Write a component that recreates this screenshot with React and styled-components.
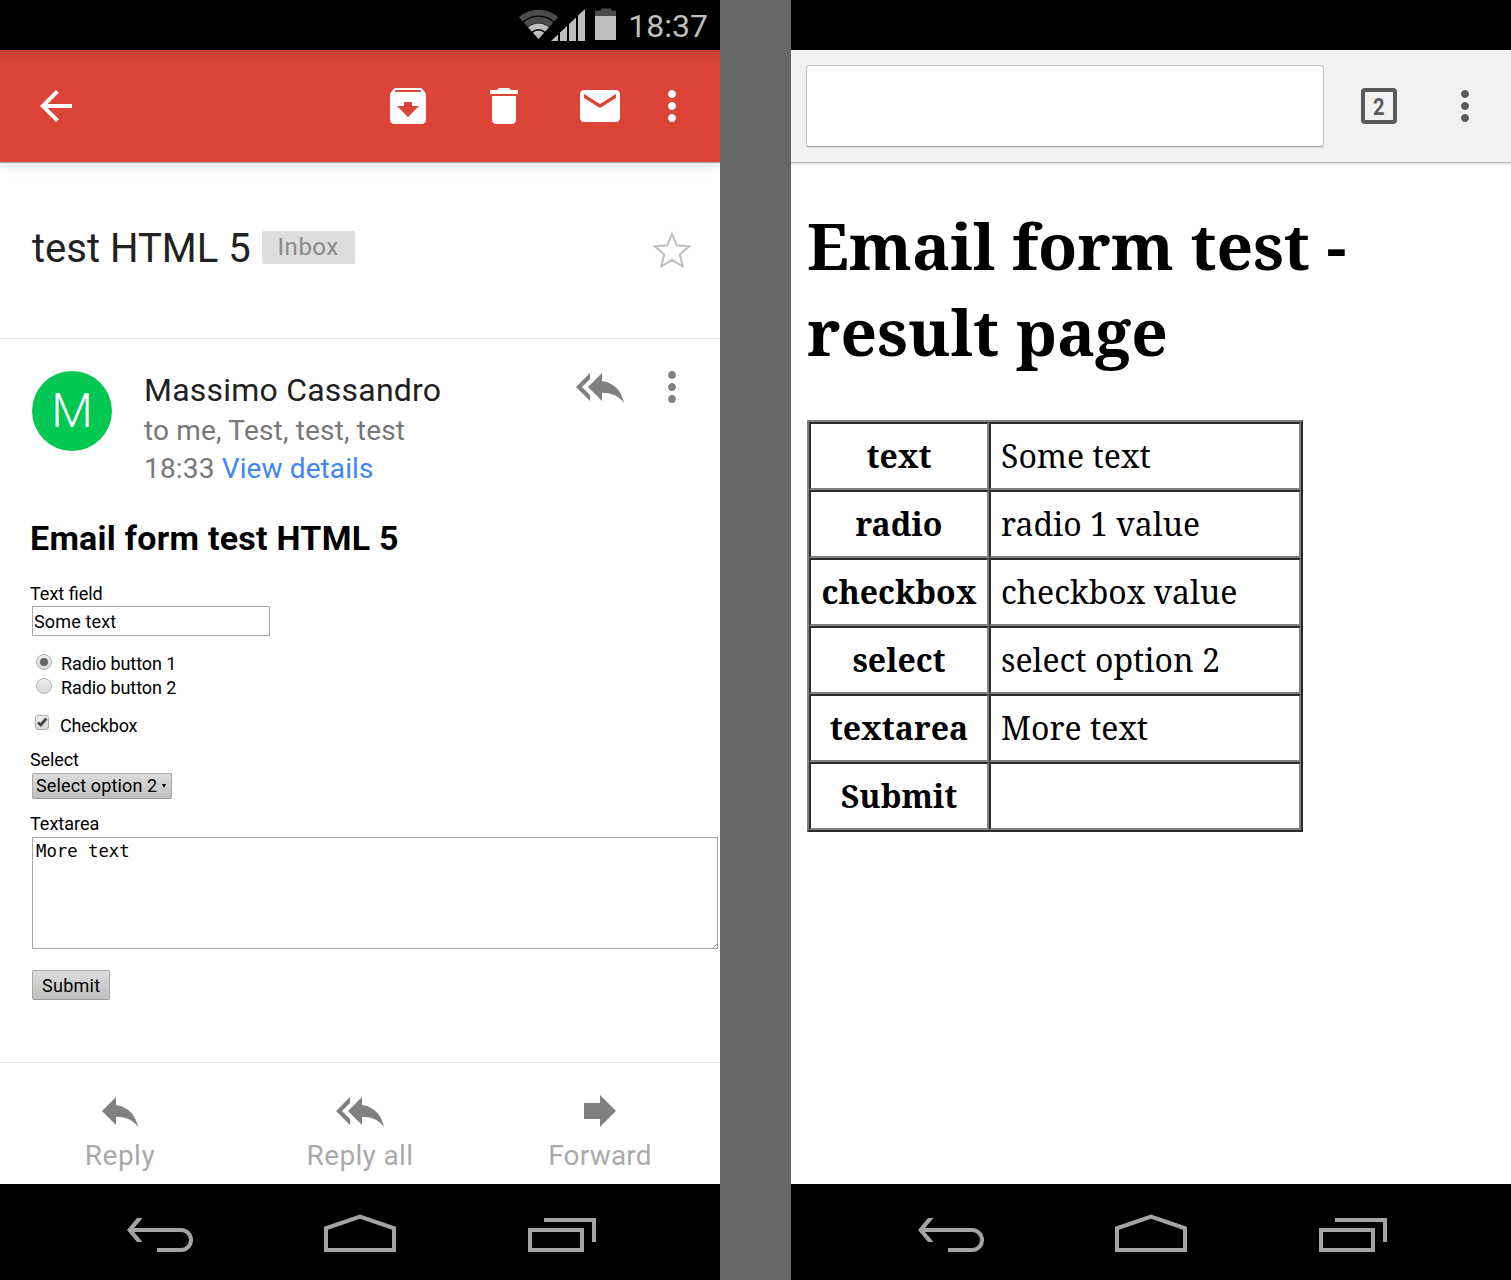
import React from "react";
import styled, { createGlobalStyle } from "styled-components";

const GlobalStyle = createGlobalStyle`
  * { box-sizing: border-box; }
  body { margin: 0; background: #666; font-family: Roboto, "Liberation Sans", sans-serif; }
`;

const Stage = styled.main`
  display: flex;
  justify-content: space-between;
  width: 1511px;
  height: 1280px;
  background: #666;
  overflow: hidden;
`;

const Phone = styled.section`
  display: flex;
  flex-direction: column;
  width: 720px;
  height: 1280px;
  background: #fff;
  overflow: hidden;
`;

const Text = styled.span`
  display: block;
  white-space: pre;
  font-size: ${(p) => p.$size}px;
  line-height: ${(p) => p.$line}px;
  font-weight: ${(p) => p.$weight || 400};
  letter-spacing: ${(p) => p.$track || 0}px;
  color: ${(p) => p.$color || "#000"};
`;

const StatusBar = styled.header`
  display: flex;
  flex: none;
  justify-content: flex-end;
  height: 50px;
  padding-right: 12px;
  background: #000;
`;

const Clock = styled(Text)`
  margin-left: 11px;
`;

const MailToolbar = styled.div`
  display: flex;
  flex: none;
  align-items: center;
  height: 112px;
  padding: 0 24px 0 32px;
  color: #fff;
  background: linear-gradient(#c73d31 0, #d54135 8px, #db4437 18px);
  box-shadow: 0 1px 1px rgba(0, 0, 0, 0.28), 0 3px 12px rgba(0, 0, 0, 0.13);
`;

const Actions = styled.div`
  display: flex;
  gap: 48px;
  margin-left: auto;
  margin-right: 24px;
`;

const Subject = styled.div`
  display: flex;
  flex: none;
  align-items: flex-start;
  height: 177px;
  padding: 60px 24px 0 32px;
  border-bottom: 1px solid #e2e2e2;
`;

const SubjectTitle = styled.div`
  padding-top: 1px;
`;

const Label = styled.span`
  width: 93px;
  height: 33px;
  margin: 9px 0 0 11px;
  border-radius: 2px;
  background: #ddd;
  color: #8a8a8a;
  font-size: 24px;
  line-height: 32px;
  letter-spacing: ${(p) => p.$track}px;
  text-align: center;
`;

const StarSlot = styled.div`
  display: flex;
  margin: 5px 0 0 auto;
`;

const Message = styled.article`
  flex: 1;
  padding-top: 30px;
`;

const Sender = styled.div`
  display: flex;
  padding: 0 24px 0 32px;
  height: 118px;
`;

const Avatar = styled.div`
  width: 80px;
  height: 80px;
  margin-top: 2px;
  border-radius: 50%;
  background: #00c853;
  text-align: center;
`;

const SenderText = styled.div`
  margin-left: 32px;
`;

const SenderActions = styled.div`
  display: flex;
  gap: 24px;
  margin: -6px 0 0 auto;
`;

const Inline = styled.div`
  display: flex;
`;

const Form = styled.form`
  display: flex;
  flex-direction: column;
  align-items: flex-start;
  padding: 31px 0 0 30px;
`;

const FormTitle = styled.h1`
  margin: 0 0 24px;
  font-size: 34px;
  line-height: 40px;
  letter-spacing: ${(p) => p.$track}px;
`;

const Field = styled.div`
  display: flex;
  width: ${(p) => p.$w}px;
  height: ${(p) => p.$h}px;
  margin: ${(p) => p.$top || 0}px 0 0 2px;
  padding: ${(p) => p.$pad};
  border: 1px solid #a6a6a6;
  background: #fff;
  font-family: ${(p) => (p.$mono ? '"DejaVu Sans Mono", monospace' : "inherit")};
  align-items: ${(p) => (p.$mono ? "flex-start" : "center")};
`;

const Resizer = styled.svg`
  align-self: flex-end;
  margin-left: auto;
`;

const FormButton = styled.div`
  display: flex;
  align-items: center;
  width: ${(p) => p.$w}px;
  height: ${(p) => p.$h}px;
  margin: ${(p) => p.$top}px 0 0 2px;
  padding: ${(p) => p.$drop || 0}px 0 0 ${(p) => p.$left}px;
  border: 1px solid #aaa;
  border-bottom-color: #999;
  border-radius: 2px;
  background: linear-gradient(#dcdcdc, #c0c0c0);
`;

const Caret = styled.span`
  width: 0;
  height: 0;
  margin-left: 5px;
  border: 2px solid transparent;
  border-top: 4px solid #000;
  border-bottom: 0;
`;

const Choice = styled.div`
  display: flex;
  gap: ${(p) => p.$gap}px;
  height: 24px;
  margin-top: ${(p) => p.$top || 0}px;
  padding-left: ${(p) => p.$left}px;
`;

const Radio = styled.span`
  display: grid;
  place-items: center;
  width: 16px;
  height: 16px;
  margin-top: 2px;
  border: 1px solid #b4b4b4;
  border-radius: 50%;
  background: linear-gradient(#eee, #d8d8d8);
`;

const RadioDot = styled.span`
  width: 8px;
  height: 8px;
  border-radius: 50%;
  background: #666;
`;

const Check = styled.span`
  display: grid;
  width: 14px;
  height: 15px;
  margin-top: 1px;
  border: 1px solid #aaa;
  border-radius: 3px;
  background: linear-gradient(#f0f0f0, #d8d8d8);
`;

const ReplyBar = styled.footer`
  display: grid;
  flex: none;
  grid-template-columns: repeat(3, 1fr);
  height: 122px;
  padding-top: 24px;
  border-top: 1px solid #e2e2e2;
`;

const ReplyAction = styled.div`
  display: flex;
  flex-direction: column;
  align-items: center;
`;

const NavBar = styled.nav`
  display: flex;
  flex: none;
  align-items: flex-start;
  justify-content: space-between;
  height: 96px;
  padding: 28px 122px 0 124px;
  background: #000;
`;

const BrowserBar = styled.div`
  display: flex;
  flex: none;
  align-items: flex-start;
  height: 112px;
  padding: 15px 22px 0 15px;
  background: #f1f1f1;
  box-shadow: 0 1px 0 #bababa, 0 2px 0 #e3e3e3, 0 3px 1px #f4f4f4;
`;

const AddressBox = styled.div`
  width: 518px;
  height: 82px;
  border: 1px solid #c4c4c4;
  border-bottom-color: #adadad;
  border-radius: 3px;
  background: #fff;
  box-shadow: 0 1px 1px rgba(0, 0, 0, 0.12);
`;

const TabCount = styled.div`
  display: grid;
  justify-content: center;
  width: 36px;
  height: 36px;
  margin: 23px 0 0 37px;
  border: 4px solid #5a5a5a;
  border-radius: 4px;
`;

const TabDigit = styled(Text)`
  transform: scaleX(0.84);
`;

const BrowserMenu = styled.div`
  display: flex;
  margin: 17px 0 0 auto;
`;

const Page = styled.article`
  flex: 1;
  padding: 41px 0 0 16px;
  color: #000;
  font-family: "Noto Serif", "Droid Serif", "DejaVu Serif Condensed", "DejaVu Serif", serif;
`;

const PageTitle = styled.h1`
  margin: 0 0 45px;
`;

const ResultTable = styled.table`
  width: 496px;
  table-layout: fixed;
  border-spacing: 0;
  border-style: solid;
  border-width: 2px;
  border-color: #808080 #2c2c2c #2c2c2c #808080;
`;

const Cell = styled.td`
  width: ${(p) => p.$w}px;
  height: 68px;
  padding: 0 0 0 ${(p) => (p.$head ? 0 : 10)}px;
  border-style: solid;
  border-width: 2px;
  border-color: #2c2c2c #808080 #808080 #2c2c2c;
  text-align: ${(p) => (p.$head ? "center" : "left")};
`;

const MaterialIcon = ({ d, color = "currentColor" }) => (
  <svg width="48" height="48" viewBox="0 0 24 24" fill={color}>
    <path d={d} />
  </svg>
);

const PATHS = {
  back: "M20 11H7.83l5.59-5.59L12 4l-8 8 8 8 1.41-1.41L7.83 13H20v-2z",
  archive:
    "M20.54 5.23l-1.39-1.68C18.88 3.21 18.47 3 18 3H6c-.47 0-.88.21-1.16.55L3.46 5.23C3.17 5.57 3 6.02 3 6.5V19c0 1.1.9 2 2 2h14c1.1 0 2-.9 2-2V6.5c0-.48-.17-.93-.46-1.27zM12 17.5L6.5 12H10v-2h4v2h3.5L12 17.5zM5.12 5l.81-1h12l.94 1H5.12z",
  trash: "M6 19c0 1.1.9 2 2 2h8c1.1 0 2-.9 2-2V7H6v12zM19 4h-3.5l-1-1h-5l-1 1H5v2h14V4z",
  mail: "M20 4H4c-1.1 0-2 .9-2 2v12c0 1.1.9 2 2 2h16c1.1 0 2-.9 2-2V6c0-1.1-.9-2-2-2zm0 4l-8 5-8-5V6l8 5 8-5v2z",
  more: "M12 8c1.1 0 2-.9 2-2s-.9-2-2-2-2 .9-2 2 .9 2 2 2zm0 2c-1.1 0-2 .9-2 2s.9 2 2 2 2-.9 2-2-.9-2-2-2zm0 6c-1.1 0-2 .9-2 2s.9 2 2 2 2-.9 2-2-.9-2-2-2z",
  reply: "M10 9V5l-7 7 7 7v-4.1c5 0 8.5 1.6 11 5.1-1-5-4-10-11-11z",
  replyAll:
    "M7 8V5l-7 7 7 7v-3l-4-4 4-4zm6 1V5l-7 7 7 7v-4.1c5 0 8.5 1.6 11 5.1-1-5-4-10-11-11z",
  forward: "M4 8h8V4l8 8-8 8v-4H4z",
};

const StatusIcons = () => (
  <svg width="98" height="50" viewBox="519 0 98 50" fill="none">
    <defs>
      <clipPath id="fan">
        <path d="M538.5 39L517 15V5H560V15Z" />
      </clipPath>
    </defs>
    <g clipPath="url(#fan)">
      <circle cx="538.5" cy="39" r="26.4" stroke="#4b4b4b" strokeWidth="5.6" />
      <circle cx="538.5" cy="39" r="19.1" stroke="#4b4b4b" strokeWidth="6.2" />
      <circle cx="538.5" cy="39" r="12.7" stroke="#bebebe" strokeWidth="5.6" />
      <circle cx="538.5" cy="39" r="8.6" fill="#bebebe" />
    </g>
    <path
      d="M551 41L558 34.4V41ZM560 41V32.5L567 25.9V41ZM569 41V24L576 17.4V41ZM578 41V15.6L585 9V41Z"
      fill="#bebebe"
    />
    <path d="M595 10.5H601V8.5H611V10.5H616V16H595Z" fill="#4b4b4b" />
    <path d="M595 16H616V40H595Z" fill="#bebebe" />
  </svg>
);

const Star = () => (
  <svg width="48" height="48" viewBox="648 227.5 48 48" fill="none" stroke="#bdbdbd" strokeWidth="2">
    <path d="M672 234.4L676.8 245.7L689.3 246.8L679.8 254.8L682.7 267L672 260.5L661.3 267L664.2 254.8L654.7 246.8L667.2 245.7Z" />
  </svg>
);

const SystemNav = () => (
  <NavBar>
    <svg width="72" height="44" viewBox="124 1212 72 44" fill="none" stroke="#a4a4a4" strokeWidth="4">
      <path d="M129 1230H181A10 10 0 0 1 181 1250H157" />
      <path d="M127 1230L137 1218H142.5L132.5 1230L142.5 1242H137Z" fill="#a4a4a4" stroke="none" />
    </svg>
    <svg width="76" height="44" viewBox="323 1212 76 44" fill="none" stroke="#a4a4a4" strokeWidth="4">
      <path d="M326 1250V1228.3L360 1216.6L394 1228.3V1250Z" />
    </svg>
    <svg width="72" height="44" viewBox="526 1212 72 44" fill="none" stroke="#a4a4a4" strokeWidth="4">
      <path d="M530 1230H582V1250H530ZM544 1220H594V1242" />
    </svg>
  </NavBar>
);

const replyActions = [
  { label: "Reply", icon: "reply", track: 0.5 },
  { label: "Reply all", icon: "replyAll", track: 0.35 },
  { label: "Forward", icon: "forward", track: 0.2 },
];

const results = [
  ["text", "Some text"],
  ["radio", "radio 1 value"],
  ["checkbox", "checkbox value"],
  ["select", "select option 2"],
  ["textarea", "More text"],
  ["Submit", ""],
];

const MailPhone = () => (
  <Phone>
    <StatusBar>
      <StatusIcons />
      <Clock $size={32} $line={52} $color="#bebebe">18:37</Clock>
    </StatusBar>
    <MailToolbar>
      <MaterialIcon d={PATHS.back} />
      <Actions>
        <MaterialIcon d={PATHS.archive} />
        <MaterialIcon d={PATHS.trash} />
        <MaterialIcon d={PATHS.mail} />
      </Actions>
      <MaterialIcon d={PATHS.more} />
    </MailToolbar>
    <Subject>
      <SubjectTitle>
        <Text $size={40} $line={52} $color="#212121">test HTML 5</Text>
      </SubjectTitle>
      <Label $track={0.5}>Inbox</Label>
      <StarSlot><Star /></StarSlot>
    </Subject>
    <Message>
      <Sender>
        <Avatar>
          <Text $size={48} $line={80} $weight={300} $color="#fff">M</Text>
        </Avatar>
        <SenderText>
          <Text $size={32} $line={42} $color="#212121" $track={0.22}>Massimo Cassandro</Text>
          <Text $size={28} $line={40} $color="#777" $track={0.18}>to me, Test, test, test</Text>
          <Inline>
            <Text $size={28} $line={36} $color="#777" $track={0.18}>{"18:33 "}</Text>
            <Text $size={28} $line={36} $color="#4285f4" $track={0.1}>View details</Text>
          </Inline>
        </SenderText>
        <SenderActions>
          <MaterialIcon d={PATHS.replyAll} color="#808080" />
          <MaterialIcon d={PATHS.more} color="#808080" />
        </SenderActions>
      </Sender>
      <Form>
        <FormTitle $track={0.27}>Email form test HTML 5</FormTitle>
        <Text $size={18} $line={24}>Text field</Text>
        <Field $w={238} $h={30} $pad="2px 0 0 1px">
          <Text $size={18} $line={24} $track={0.15}>Some text</Text>
        </Field>
        <Choice $gap={9} $top={16} $left={6}>
          <Radio><RadioDot /></Radio>
          <Text $size={18} $line={24} $track={-0.1}>Radio button 1</Text>
        </Choice>
        <Choice $gap={9} $left={6}>
          <Radio />
          <Text $size={18} $line={24} $track={-0.1}>Radio button 2</Text>
        </Choice>
        <Choice $gap={11} $top={14} $left={5}>
          <Check>
            <svg width="12" height="12" viewBox="0 0 12 12" fill="none" stroke="#444" strokeWidth="2.8">
              <path d="M2 6.5L4.8 9L10.3 2.5" />
            </svg>
          </Check>
          <Text $size={18} $line={24} $track={-0.2}>Checkbox</Text>
        </Choice>
        <Choice $gap={0} $top={10} $left={0}>
          <Text $size={18} $line={24} $track={-0.1}>Select</Text>
        </Choice>
        <FormButton $w={140} $h={26} $top={1} $left={3}>
          <Text $size={18} $line={24} $track={0.13}>Select option 2</Text>
          <Caret />
        </FormButton>
        <Choice $gap={0} $top={13} $left={0}>
          <Text $size={18} $line={24}>Textarea</Text>
        </Choice>
        <Field $w={686} $h={112} $top={1} $pad="1px 0 0 3px" $mono>
          <Text $size={17.3} $line={24}>More text</Text>
          <Resizer width="4" height="4" viewBox="0 0 4 4" stroke="#999">
            <path d="M0 4L4 0" />
          </Resizer>
        </Field>
        <FormButton $w={78} $h={30} $top={21} $left={9} $drop={2}>
          <Text $size={18} $line={24} $track={0.28}>Submit</Text>
        </FormButton>
      </Form>
    </Message>
    <ReplyBar>
      {replyActions.map((a) => (
        <ReplyAction key={a.label}>
          <MaterialIcon d={PATHS[a.icon]} color="#808080" />
          <Text $size={28} $line={42} $color="#aaa" $track={a.track}>{a.label}</Text>
        </ReplyAction>
      ))}
    </ReplyBar>
    <SystemNav />
  </Phone>
);

const BrowserPhone = () => (
  <Phone>
    <StatusBar />
    <BrowserBar>
      <AddressBox />
      <TabCount>
        <TabDigit $size={24} $line={30} $weight={700} $color="#5a5a5a">2</TabDigit>
      </TabCount>
      <BrowserMenu>
        <MaterialIcon d={PATHS.more} color="#5a5a5a" />
      </BrowserMenu>
    </BrowserBar>
    <Page>
      <PageTitle>
        <Text $size={64} $line={86} $weight={700}>Email form test -</Text>
        <Text $size={64} $line={86} $weight={700}>result page</Text>
      </PageTitle>
      <ResultTable>
        <tbody>
          {results.map(([name, value]) => (
            <tr key={name}>
              <Cell as="th" $head $w={180}>
                <Text $size={32} $line={44} $weight={700}>{name}</Text>
              </Cell>
              <Cell $w={312}>
                <Text $size={32} $line={44}>{value}</Text>
              </Cell>
            </tr>
          ))}
        </tbody>
      </ResultTable>
    </Page>
    <SystemNav />
  </Phone>
);

export default function App() {
  return (
    <>
      <GlobalStyle />
      <Stage>
        <MailPhone />
        <BrowserPhone />
      </Stage>
    </>
  );
}
